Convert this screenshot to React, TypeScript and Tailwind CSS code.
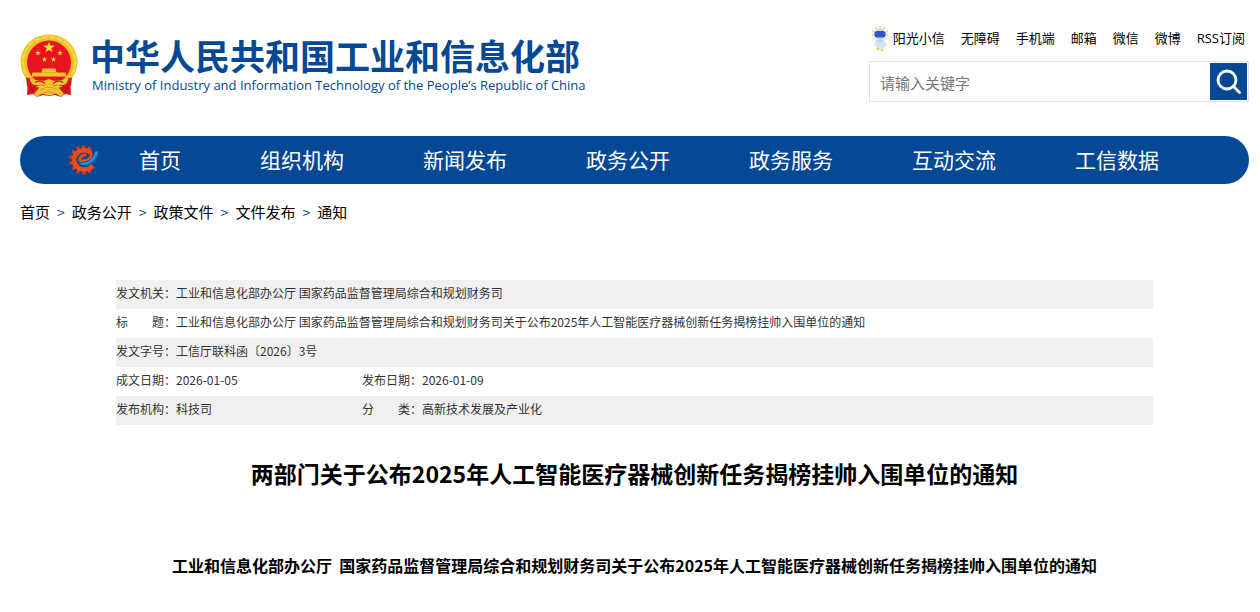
import React from "react";

const topLinks = ["无障碍", "手机端", "邮箱", "微信", "微博", "RSS订阅"];
const navItems = ["首页", "组织机构", "新闻发布", "政务公开", "政务服务", "互动交流", "工信数据"];
const crumbs = ["首页", "政务公开", "政策文件", "文件发布", "通知"];

function star(cx: number, cy: number, r: number) {
  return Array.from({ length: 10 }, (_, i) => {
    const a = (Math.PI / 5) * i - Math.PI / 2;
    const d = i % 2 ? r * 0.4 : r;
    return `${(cx + d * Math.cos(a)).toFixed(2)},${(cy + d * Math.sin(a)).toFixed(2)}`;
  }).join(" ");
}

function Emblem() {
  return (
    <svg viewBox="0 0 58 64" className="h-16 w-[58px] shrink-0" aria-hidden="true">
      <path d="M8 44L7 61L13 60L17 63L23 61L29 62L35 61L41 63L45 60L51 61L50 44Z" fill="#d9141d" />
      <ellipse cx="29" cy="28" rx="28.500" ry="27.500" fill="#efc02a" />
      <ellipse cx="29" cy="28" rx="26" ry="25" fill="none" stroke="#f8d740" strokeWidth="2.400" strokeDasharray="6 1.500" />
      <circle cx="29" cy="28.500" r="22" fill="#e8141f" />
      <polygon points={star(29, 13.5, 6)} fill="#fbdc3c" />
      <polygon points={star(18, 19, 2.9)} fill="#fbdc3c" />
      <polygon points={star(40, 19, 2.9)} fill="#fbdc3c" />
      <polygon points={star(24.5, 25.5, 2.9)} fill="#fbdc3c" />
      <polygon points={star(33.5, 25.5, 2.9)} fill="#fbdc3c" />
      <path d="M22.500 34.500H35.500L36.500 38.500H45.500L46.500 42.500H11.500L12.500 38.500H21.500Z" fill="#f3c62d" />
      <path d="M21 38.500H37" stroke="#dda41e" strokeWidth="0.700" />
      <path d="M6 43.500Q29 48 52 43.500L51 52H7Z" fill="#dc151e" />
      <path d="M10 43.500Q17 47.500 25 46.500L29 45L33 46.500Q41 47.500 48 43.500Q49 47 45 50.500Q38 52.500 33.500 51L29 49.500L24.500 51Q20 52.500 13 50.500Q9 47 10 43.500Z" fill="#f0c42c" />
      <path d="M15 48.500Q20 45.500 25 49.500M43 48.500Q38 45.500 33 49.500" fill="none" stroke="#dc151e" strokeWidth="1.200" />
      <path d="M29 49L39 54L44 60L41 63L36 59.500L29 61.500L22 59.500L17 63L14 60L19 54Z" fill="#f0c42c" />
      <path d="M20 56Q29 50.500 38 56M24 59Q29 56 34 59" fill="none" stroke="#d99d20" strokeWidth="1" />
      <path d="M10 50L13 58M48 50L45 58" fill="none" stroke="#a90c16" strokeWidth="1" />
    </svg>
  );
}

function Mascot() {
  return (
    <svg viewBox="0 0 18 26" className="h-[26px] w-[18px] shrink-0" aria-hidden="true">
      <g fill="#f5d552">
        <circle cx="9" cy="1.500" r="1.100" />
        <circle cx="5" cy="2.200" r="1" />
        <circle cx="13" cy="2.200" r="1" />
        <circle cx="2" cy="5" r="1" />
        <circle cx="16" cy="5" r="1" />
        <circle cx="1.500" cy="9" r="1" />
        <circle cx="16.500" cy="9" r="1" />
        <circle cx="3" cy="12.500" r="1" />
        <circle cx="15" cy="12.500" r="1" />
      </g>
      <ellipse cx="9" cy="8" rx="6.500" ry="5.500" fill="#c5d9f5" />
      <rect x="3.500" y="5" width="11" height="6.500" rx="3" fill="#2f50cf" />
      <path d="M5 13H13L16 20L13.500 20.500L12.500 23.500H10L9 21L8 22.500H6L5 19.500L3 20Z" fill="#d5e4f4" />
      <path d="M7 14L9 16L11 14" stroke="#9fc2ec" strokeWidth="1" fill="none" />
      <circle cx="7" cy="22.800" r="1.200" fill="#f5b93d" />
      <circle cx="11" cy="24" r="1.200" fill="#f5b93d" />
    </svg>
  );
}

function GearLogo() {
  const teeth = [-26, 0, 26, 52, 78, 104, 130, 156, 182, 208];
  return (
    <svg viewBox="0 0 32 30" className="h-[30px] w-8 shrink-0" aria-hidden="true">
      {teeth.map((a) => (
        <rect key={a} x="15" y="0.500" width="3.200" height="4" fill="#dc3a1c" transform={`rotate(${-a} 16.500 15)`} />
      ))}
      <path d="M24 7.500Q20 4.500 15 5.500Q7 8 7 15Q8 23 15.500 24.500Q21 25 26 21" stroke="#ee4c14" strokeWidth="4.600" fill="none" />
      <path d="M23 6Q26 11 21.500 14Q17 16.800 12.500 15.200Q12.500 10.500 19.500 9.600" stroke="#ee4c14" strokeWidth="2.600" fill="none" />
      <path d="M11.500 17.500Q19 19 24.500 13.500Q27 11 27.500 7.500Q31.500 4.500 31.500 8Q29.500 15 24 18.500Q15.500 22.500 11.500 17.500Z" fill="#1480ca" />
      <path d="M14 19Q21 19.500 26 14Q28.500 11 29.500 7.500" stroke="#4aa9e2" strokeWidth="0.800" fill="none" />
    </svg>
  );
}

const labelCls = "p-0 pb-[3px] text-left font-normal whitespace-nowrap";
const valueCls = "p-0 pb-[3px]";

function MetaRow({ label, value, shaded }: { label: string; value: string; shaded?: boolean }) {
  return (
    <tr className={shaded ? "h-[29px] bg-[#f0f0f0]" : "h-[29px]"}>
      <th scope="row" className={labelCls}>{label}</th>
      <td colSpan={3} className={valueCls}>{value}</td>
    </tr>
  );
}

function MetaPair({ items, shaded }: { items: [string, string][]; shaded?: boolean }) {
  return (
    <tr className={shaded ? "h-[29px] bg-[#f0f0f0]" : "h-[29px]"}>
      {items.map(([label, value]) => (
        <React.Fragment key={label}>
          <th scope="row" className={labelCls}>{label}</th>
          <td className={valueCls}>{value}</td>
        </React.Fragment>
      ))}
    </tr>
  );
}

export default function App() {
  return (
    <div lang="zh-CN" className="bg-white pr-[11px] pl-5 font-['Noto_Sans_CJK_SC',sans-serif] text-black">
      <header>
        <div className="flex min-h-34 items-start justify-between pt-[26px]">
          <a href="#" className="flex items-start gap-3 pt-2 text-[#054896]">
            <Emblem />
            <span className="flex flex-col">
              <span className="text-[35px] leading-[42px] font-bold whitespace-nowrap">中华人民共和国工业和信息化部</span>
              <span className="pl-[2px] font-['Open_Sans',sans-serif] text-[13px] leading-[18px] font-medium whitespace-nowrap">
                Ministry of Industry and Information Technology of the People’s Republic of China
              </span>
            </span>
          </a>
          <div className="flex w-[380px] flex-col gap-[9px]">
            <div className="flex h-[26px] items-center justify-end gap-4 pr-1 font-['Open_Sans','Noto_Sans_CJK_SC',sans-serif] text-[13px] whitespace-nowrap">
              <a href="#" className="flex items-center gap-1">
                <Mascot />
                阳光小信
              </a>
              {topLinks.map((t) => (
                <a key={t} href="#">{t}</a>
              ))}
            </div>
            <form className="flex h-[41px] items-center border border-[#e3e3e3] pr-px" onSubmit={(e) => e.preventDefault()}>
              <input
                type="text"
                aria-label="请输入关键字"
                placeholder="请输入关键字"
                className="h-full min-w-0 flex-1 px-[10px] pt-[2px] text-[15px] outline-none placeholder:text-[#757575]"
              />
              <button type="submit" aria-label="搜索" className="flex h-[37px] w-[37px] items-center justify-center bg-[#054896]">
                <svg viewBox="0 0 26 26" className="h-[26px] w-[26px]" fill="none" stroke="white" strokeWidth="2.800" strokeLinecap="round">
                  <circle cx="11" cy="11" r="9" />
                  <path d="M17.800 17.800L23.500 23.500" />
                </svg>
              </button>
            </form>
          </div>
        </div>
        <nav className="flex h-12 items-center rounded-full bg-[#054896] pl-[47px] text-[21px] whitespace-nowrap text-white">
          <GearLogo />
          <div className="flex gap-[79px] pl-10">
            {navItems.map((t) => (
              <a key={t} href="#">{t}</a>
            ))}
          </div>
        </nav>
      </header>

      <nav aria-label="面包屑" className="flex h-14 items-center gap-[7px] text-[15px] whitespace-nowrap">
        {crumbs.map((t, i) => (
          <React.Fragment key={t}>
            {i > 0 && <span className="text-sm text-[#054896]">&gt;</span>}
            <a href="#">{t}</a>
          </React.Fragment>
        ))}
      </nav>

      <main className="px-24 pt-10">
        <table className="w-full table-fixed border-collapse text-xs text-[#333]">
          <colgroup>
            <col className="w-15" />
            <col className="w-[186px]" />
            <col className="w-15" />
            <col />
          </colgroup>
          <tbody>
            <MetaRow shaded label="发文机关：" value="工业和信息化部办公厅 国家药品监督管理局综合和规划财务司" />
            <MetaRow
              label="标　　题："
              value="工业和信息化部办公厅 国家药品监督管理局综合和规划财务司关于公布2025年人工智能医疗器械创新任务揭榜挂帅入围单位的通知"
            />
            <MetaRow shaded label="发文字号：" value="工信厅联科函〔2026〕3号" />
            <MetaPair items={[["成文日期：", "2026-01-05"], ["发布日期：", "2026-01-09"]]} />
            <MetaPair shaded items={[["发布机构：", "科技司"], ["分　　类：", "高新技术发展及产业化"]]} />
          </tbody>
        </table>
        <h1 className="pt-8 text-center text-[23px] leading-8 font-bold">
          两部门关于公布2025年人工智能医疗器械创新任务揭榜挂帅入围单位的通知
        </h1>
        <p className="pt-[62px] pb-8 text-center text-base leading-7 font-bold">
          工业和信息化部办公厅&nbsp; 国家药品监督管理局综合和规划财务司关于公布2025年人工智能医疗器械创新任务揭榜挂帅入围单位的通知
        </p>
      </main>
    </div>
  );
}
